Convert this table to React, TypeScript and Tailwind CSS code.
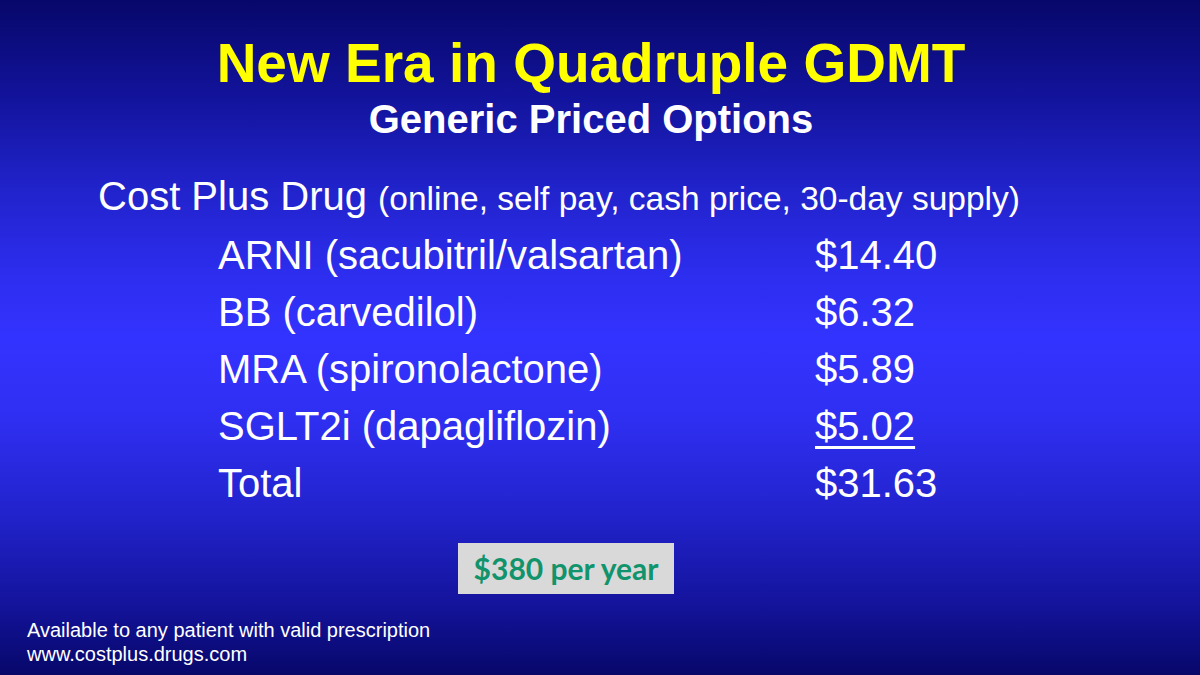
const rows = [
  { label: "ARNI (sacubitril/valsartan)", price: "$14.40" },
  { label: "BB (carvedilol)", price: "$6.32" },
  { label: "MRA (spironolactone)", price: "$5.89" },
  { label: "SGLT2i (dapagliflozin)", price: "$5.02", underline: true },
  { label: "Total", price: "$31.63" },
]

export default function App() {
  return (
    <div className="h-[675px] w-[1200px] overflow-hidden bg-[linear-gradient(to_bottom,#07076a_0%,#12139a_14%,#2022c8_27%,#2c2ded_40%,#3333ff_50%,#2f2ff2_62%,#2223cc_76%,#14149e_89%,#07076a_100%)] font-['Liberation_Sans',Arial,sans-serif] text-white">
      <div className="flex flex-col items-center pt-[36px] pr-[18px]">
        <h1 className="text-[55px] font-bold leading-none text-[#ffff00]">New Era in Quadruple GDMT</h1>
        <h2 className="mt-[8px] text-[40px] font-bold leading-none">Generic Priced Options</h2>
      </div>

      <div className="mt-[29px] pl-[98px]">
        <p className="text-[40px] leading-[57px]">
          Cost Plus Drug <span className="text-[33.5px]">(online, self pay, cash price, 30-day supply)</span>
        </p>
        <div className="pl-[120px]">
          {rows.map((r) => (
            <div key={r.label} className="flex text-[40px] leading-[57px]">
              <span className="w-[597px]">{r.label}</span>
              <span className={r.underline ? "underline decoration-[3px] underline-offset-[6px]" : ""}>{r.price}</span>
            </div>
          ))}
        </div>
      </div>

      <div className="mt-[31px] flex pl-[458px]">
        <div className="flex h-[51px] w-[216px] items-center justify-center bg-[#d9d9d9] font-['Lato',sans-serif] text-[30px] font-bold text-[#11936b]">
          $380 per year
        </div>
      </div>

      <div className="mt-[24px] pl-[27px] text-[20px] leading-[24px]">
        <p>Available to any patient with valid prescription</p>
        <p>www.costplus.drugs.com</p>
      </div>
    </div>
  )
}
